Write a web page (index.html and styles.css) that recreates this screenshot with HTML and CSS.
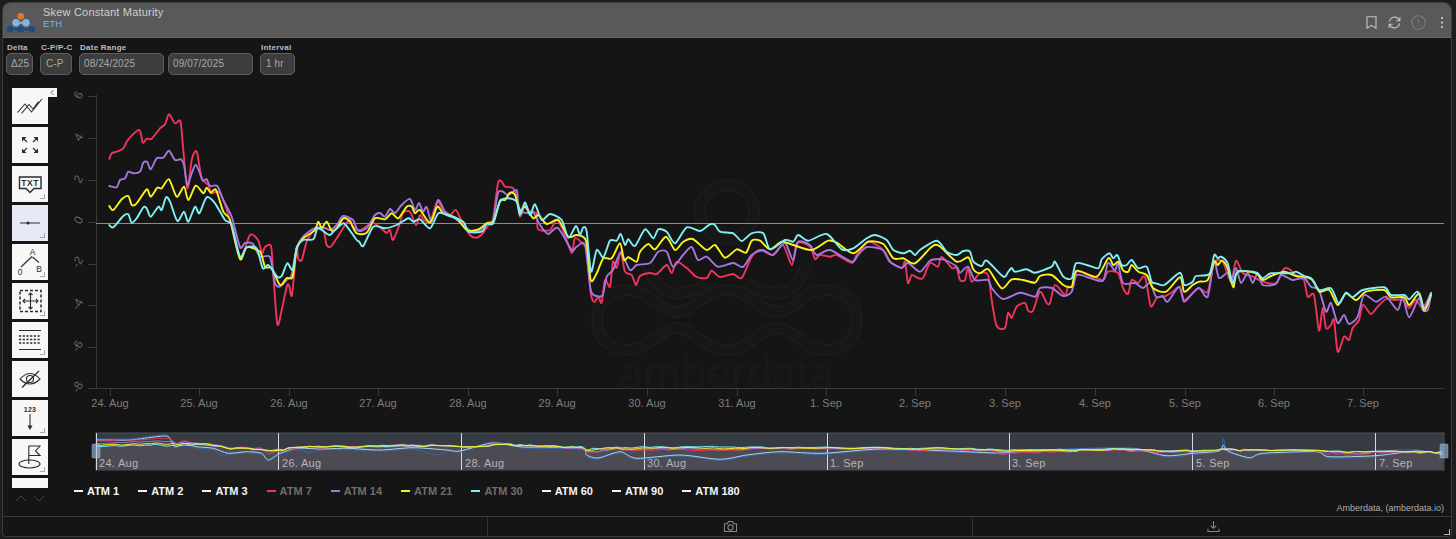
FILE: index.html
```html
<!DOCTYPE html>
<html lang="en">
<head>
<meta charset="utf-8">
<title>Skew Constant Maturity</title>
<link rel="stylesheet" href="styles.css">
</head>
<body>
<div class="app">
  <header class="head">
    <svg class="logo" viewBox="0 0 36 28" width="36" height="28">
      <path class="logo-link-d" d="M5 22.3H27"/>
      <path class="logo-link-l" d="M11 15.7H21"/>
      <circle cx="15.7" cy="9.3" r="3.3" fill="#e8772e"/>
      <circle cx="11" cy="15.7" r="3.7" fill="#7db7e0"/>
      <circle cx="21" cy="15.7" r="3.7" fill="#7db7e0"/>
      <circle cx="5" cy="22.3" r="3.3" fill="#1f4a80"/>
      <circle cx="15.7" cy="22.3" r="3.3" fill="#1f4a80"/>
      <circle cx="26.7" cy="22.3" r="3.3" fill="#1f4a80"/>
    </svg>
    <div class="titles">
      <div class="title">Skew Constant Maturity</div>
      <div class="sub">ETH</div>
    </div>
    <div class="head-icons">
      <svg class="hi i-book" viewBox="0 0 11 13" width="11" height="13"><path d="M1 .7H10V12.2L5.5 9.4 1 12.2Z"/></svg>
      <svg class="hi i-sync" viewBox="0 0 14 14" width="13" height="13"><path d="M1.6 6A5.5 5.5 0 0 1 11.4 3.4L12.8 5M12.8 1.2V5H9M12.4 8A5.5 5.5 0 0 1 2.6 10.6L1.2 9M1.2 12.8V9H5"/></svg>
      <svg class="hi dim i-info" viewBox="0 0 15 15" width="15" height="15"><circle cx="7.5" cy="7.5" r="6.8"/><path d="M7.5 4V8.2M7.5 10.2V11"/></svg>
      <svg class="dots" viewBox="0 0 4 14" width="4" height="14"><circle cx="2" cy="2" r="1.1"/><circle cx="2" cy="6.5" r="1.1"/><circle cx="2" cy="11" r="1.1"/></svg>
    </div>
  </header>

  <section class="controls">
    <div class="field"><label class="lab">Delta</label><div class="inp w-delta">Δ25</div></div>
    <div class="field"><label class="lab">C-P/P-C</label><div class="inp w-cp">C-P</div></div>
    <div class="field"><label class="lab">Date Range</label>
      <div class="pair"><div class="inp w-date">08/24/2025</div><div class="inp w-date">09/07/2025</div></div>
    </div>
    <div class="field"><label class="lab">Interval</label><div class="inp w-int">1 hr</div></div>
  </section>

  <div class="main">
    <aside class="tools">
      <div class="tool">
        <svg viewBox="0 0 36 36"><path d="M5.5 24.5 13 16 19.5 24 30 11M9.5 25.5 17 16.5 21 21 26.5 13.5"/></svg>
        <span class="collapse"><svg viewBox="0 0 9 9"><path d="M5.5 2 3 4.5 5.5 7"/></svg></span>
      </div>
      <div class="tool">
        <svg viewBox="0 0 36 36"><path d="M15 15 11 11M21 15 25 11M15 21 11 25M21 21 25 25"/><path class="fill" d="M10 10H14.5L10 14.5ZM26 10H21.5L26 14.5ZM10 26H14.5L10 21.5ZM26 26H21.5L26 21.5Z"/></svg>
      </div>
      <div class="tool grip">
        <svg viewBox="0 0 36 36"><path class="thick" d="M7.5 11H29V22.5H22L18 26.5 14 22.5H7.5Z"/><text class="ic-t" x="18.2" y="20.2">TXT</text></svg>
      </div>
      <div class="tool grip on">
        <svg viewBox="0 0 36 36"><path d="M8 18H28"/><circle class="fill" cx="16" cy="18" r="1.6"/></svg>
      </div>
      <div class="tool grip">
        <svg viewBox="0 0 36 36"><path d="M9 23 20 12.5M20.5 13 27 18.5"/><text class="ic-s" x="20.5" y="11">A</text><text class="ic-s" x="8" y="30.5">0</text><text class="ic-s" x="27" y="28">B</text></svg>
      </div>
      <div class="tool grip">
        <svg viewBox="0 0 36 36"><path class="dash" d="M8 7.5H29V28.5H8Z"/><path d="M18.5 10V26M11 18H26"/><path d="M16.5 12 18.5 10 20.5 12M16.5 24 18.5 26 20.5 24M13 16 11 18 13 20M24 16 26 18 24 20"/></svg>
      </div>
      <div class="tool grip">
        <svg viewBox="0 0 36 36"><path d="M7 8.5H29M7 27.5H29"/><path class="dots-l" d="M7 14H29M7 17.5H29M7 21H29"/></svg>
      </div>
      <div class="tool">
        <svg viewBox="0 0 36 36"><path d="M8 18Q18 7 28 18 18 28 8 18Z"/><circle cx="18" cy="18" r="3.5"/><path class="ln" d="M10 26.5 27 10"/></svg>
      </div>
      <div class="tool grip">
        <svg viewBox="0 0 36 36"><text class="ic-n" x="18" y="12">123</text><path d="M18 14V28"/><path class="fill" d="M15.5 25.5H20.5L18 30Z"/></svg>
      </div>
      <div class="tool grip">
        <svg viewBox="0 0 36 36"><path d="M16.8 25V7H28L23.5 12 28 16.5H16.8"/><ellipse cx="17.5" cy="25" rx="10.5" ry="4"/></svg>
      </div>
      <div class="tool stub"></div>
      <div class="tool-nav">
        <svg viewBox="0 0 12 7" width="12" height="7"><path d="M1 6 6 1 11 6"/></svg>
        <svg viewBox="0 0 12 7" width="12" height="7"><path d="M1 1 6 6 11 1"/></svg>
      </div>
    </aside>

    <div class="chart-col">
      <svg class="chart" viewBox="60 85 1392 395" width="1392" height="395">
        <g class="wm">
          <circle cx="727" cy="212" r="27"/>
          <path d="M647 263C655 290 670 295 681 293S700 290 707 283M807 263C799 290 784 295 773 293S754 290 747 283"/>
          <path d="M627 290C650 290 660 312 677 312C694 312 704 290 727 290C750 290 760 312 777 312C794 312 804 290 827 290C867 290 867 350 827 350C804 350 794 328 777 328C760 328 750 350 727 350C704 350 694 328 677 328C660 328 650 350 627 350C587 350 587 290 627 290Z"/>
        </g>
        <g class="wm wm-in">
          <circle cx="727" cy="212" r="27"/>
          <path d="M647 263C655 290 670 295 681 293S700 290 707 283M807 263C799 290 784 295 773 293S754 290 747 283"/>
          <path d="M627 290C650 290 660 312 677 312C694 312 704 290 727 290C750 290 760 312 777 312C794 312 804 290 827 290C867 290 867 350 827 350C804 350 794 328 777 328C760 328 750 350 727 350C704 350 694 328 677 328C660 328 650 350 627 350C587 350 587 290 627 290Z"/>
        </g>
        <text class="wm-t" x="727" y="389">amberdata</text>

        <path class="axis" d="M96.5 95V389M88 96.5H96M88 138.5H96M88 180.5H96M88 222.5H96M88 264.5H96M88 305.5H96M88 347.5H96M88 388.5H96"/>
        <path class="axis" d="M96 388.5H1444M110.5 389V396M199.5 389V396M289.5 389V396M378.5 389V396M468.5 389V396M557.5 389V396M647.5 389V396M737.5 389V396M826.5 389V396M915.5 389V396M1005.5 389V396M1095.5 389V396M1185.5 389V396M1274.5 389V396M1363.5 389V396"/>
        <g class="yl">
          <text transform="translate(82 97) rotate(-60)">6</text>
          <text transform="translate(82 139) rotate(-60)">4</text>
          <text transform="translate(82 181) rotate(-60)">2</text>
          <text transform="translate(82 222) rotate(-60)">0</text>
          <text transform="translate(81 264) rotate(-60)">-2</text>
          <text transform="translate(81 306) rotate(-60)">-4</text>
          <text transform="translate(81 348) rotate(-60)">-6</text>
          <text transform="translate(81 389) rotate(-60)">-8</text>
        </g>
        <g class="xl">
          <text x="110" y="407">24. Aug</text><text x="199" y="407">25. Aug</text><text x="289" y="407">26. Aug</text>
          <text x="378" y="407">27. Aug</text><text x="468" y="407">28. Aug</text><text x="557" y="407">29. Aug</text>
          <text x="647" y="407">30. Aug</text><text x="737" y="407">31. Aug</text><text x="826" y="407">1. Sep</text>
          <text x="915" y="407">2. Sep</text><text x="1005" y="407">3. Sep</text><text x="1095" y="407">4. Sep</text>
          <text x="1185" y="407">5. Sep</text><text x="1274" y="407">6. Sep</text><text x="1363" y="407">7. Sep</text>
        </g>

        <path class="zero" d="M96 223.5H1444"/>
        <path class="s red" id="m-red"/>
        <path class="s pur" id="m-pur"/>
        <path class="s yel" id="m-yel"/>
        <path class="s cya" id="m-cya"/>

        <rect class="nav-bg" x="96" y="433" width="1348" height="37"/>
        <path class="nav-area" id="n-area"/>
        <path class="nav-grid" d="M96.5 433V470M278.5 433V470M461.5 433V470M644.5 433V470M827.5 433V470M1009.5 433V470M1192.5 433V470M1375.5 433V470"/>
        <g class="nl">
          <text x="99" y="467">24. Aug</text><text x="282" y="467">26. Aug</text><text x="465" y="467">28. Aug</text>
          <text x="647" y="467">30. Aug</text><text x="830" y="467">1. Sep</text><text x="1012" y="467">3. Sep</text>
          <text x="1196" y="467">5. Sep</text><text x="1379" y="467">7. Sep</text>
        </g>
        <path class="n dkb" id="n-dkb"/>
        <path class="n lib" id="n-lib"/>
        <path class="n red" id="n-red"/>
        <path class="n pur" id="n-pur"/>
        <path class="n cya" id="n-cya"/>
        <path class="n yel" id="n-yel"/>
        <rect class="handle" x="92" y="444" width="8" height="14" rx="1"/>
        <rect class="handle" x="1440" y="444" width="8" height="14" rx="1"/>
      </svg>

      <ul class="legend">
        <li class="li"><i></i>ATM 1</li>
        <li class="li"><i></i>ATM 2</li>
        <li class="li"><i></i>ATM 3</li>
        <li class="li off k-red"><i></i>ATM 7</li>
        <li class="li off k-pur"><i></i>ATM 14</li>
        <li class="li off k-yel"><i></i>ATM 21</li>
        <li class="li off k-cya"><i></i>ATM 30</li>
        <li class="li"><i></i>ATM 60</li>
        <li class="li"><i></i>ATM 90</li>
        <li class="li"><i></i>ATM 180</li>
      </ul>
      <div class="credit">Amberdata, (amberdata.io)</div>
    </div>
  </div>

  <footer class="foot">
    <div class="fb fb-1"></div>
    <div class="fb fb-2"><svg class="fi" viewBox="0 0 16 14" width="15" height="13"><path d="M1.5 4H4.5L5.8 1.5H10.2L11.5 4H14.5V12.5H1.5Z"/><circle cx="8" cy="8" r="2.8"/></svg></div>
    <div class="fb fb-3"><svg class="fi" viewBox="0 0 14 14" width="13" height="13"><path d="M7 1V9M4 6 7 9 10 6M1 9.5V12.5H13V9.5"/></svg></div>
    <svg class="resize" viewBox="0 0 6 6" width="6" height="6"><path d="M5.5 0V5.5H0"/></svg>
  </footer>
</div>
<script src="chart.js"></script>
</body>
</html>
```
FILE: styles.css
```css
* { box-sizing: border-box; }
html, body { margin: 0; height: 100%; overflow: hidden; background: #1e1e1e; }
body { font-family: "Liberation Sans", Arial, sans-serif; padding: 2px 0 0 2px; }

.app {
  width: 1450px; height: 535px; background: #151515;
  border: 1px solid #3c3c3c; border-radius: 8px 8px 4px 4px;
  display: flex; flex-direction: column; overflow: hidden; position: relative;
}

.head {
  height: 35px; flex: none; background: #595959;
  border-bottom: 1px solid #6a6a6a;
  display: flex; align-items: center; padding: 0 7px 0 2px;
}
.logo { flex: none; margin: 1px 2px 0 0; }
.logo-link-d { stroke: #1f4a80; stroke-width: 2; fill: none; }
.logo-link-l { stroke: #7db7e0; stroke-width: 2; fill: none; }
.titles { display: flex; flex-direction: column; margin-top: -5px; }
.title { color: #cfcfcf; font-size: 11px; line-height: 13px; letter-spacing: .2px; }
.sub { color: #74b2ea; font-size: 9.5px; line-height: 10px; letter-spacing: .1px; }
.head-icons { margin-left: auto; display: flex; align-items: center; margin-top: 5px; }
.hi { fill: none; stroke: #c4c4c4; stroke-width: 1.1; flex: none; }
.hi.dim { stroke: #7c7c7c; }
.i-sync { margin-left: 11px; }
.i-info { margin-left: 10px; }
.dots { fill: #d8d8d8; margin-left: 14px; }

.controls { height: 47px; flex: none; display: flex; gap: 7px; padding: 4px 0 0 3px; }
.field { display: flex; flex-direction: column; }
.lab { color: #bdbdbd; font-size: 8px; font-weight: 700; line-height: 11px; height: 11px; width: 0; white-space: nowrap; letter-spacing: .25px; margin-left: 1px; }
.pair { display: flex; gap: 4px; }
.inp {
  height: 22px; background: #3d3d3d; border: 1px solid #5e5e5e; border-radius: 5px;
  color: #a8a8a8; font-size: 10px; line-height: 20px; padding-left: 4px; letter-spacing: .1px;
}
.w-delta { width: 27px; }
.w-cp { width: 32px; padding-left: 5px; }
.w-date { width: 85px; }
.w-int { width: 35px; padding-left: 5px; }

.main { flex: 1; min-height: 0; display: flex; }
.tools { width: 57px; flex: none; padding: 3px 0 0 9px; display: flex; flex-direction: column; gap: 3px; }
.tool {
  width: 36px; height: 36px; flex: none; background: #f7f7f7; position: relative;
}
.tool > svg { width: 36px; height: 36px; display: block; fill: none; stroke: #2c2c2c; stroke-width: 1.1; }
.tool .fill { fill: #2c2c2c; stroke: none; }
.tool .thick { stroke-width: 1.4; }
.tool .dash { stroke-dasharray: 3 2; stroke-width: 1.5; }
.tool .dots-l { stroke-dasharray: 2.2 1.5; stroke-width: 1.4; }
.tool .ln { stroke-width: 1.3; }
.tool.on { background: #e6eaf6; }
.tool.stub { height: 10px; }
.ic-t, .ic-s, .ic-n { fill: #2c2c2c; stroke: none; text-anchor: middle; font-weight: 700; font-family: "Liberation Sans", Arial, sans-serif; }
.ic-t { font-size: 8.5px; letter-spacing: .6px; }
.ic-s { font-size: 8.5px; font-weight: 400; }
.ic-n { font-size: 7px; letter-spacing: .3px; }
.grip::after {
  content: ""; position: absolute; right: 3px; bottom: 3px; width: 4px; height: 4px;
  border-right: 1px solid #a9a9a9; border-bottom: 1px solid #a9a9a9;
}
.collapse { position: absolute; top: 0; left: 36px; width: 9px; height: 9px; background: #f7f7f7; }
.collapse svg { display: block; width: 9px; height: 9px; fill: none; stroke: #666; stroke-width: 1; }
.tool-nav { display: flex; gap: 6px; margin: 4px 0 0 3px; }
.tool-nav svg { fill: none; stroke: #3f3f3f; stroke-width: 1; }

.chart-col { flex: 1; min-width: 0; display: flex; flex-direction: column; }
.chart { display: block; flex: none; }
.chart text { font-family: "Liberation Sans", Arial, sans-serif; }
.wm { fill: none; stroke: #1c1c1c; stroke-width: 12; }
.wm-in { stroke: #171717; stroke-width: 8; }
.chart .wm-t { fill: #191919; stroke: none; font-size: 46px; text-anchor: middle; font-family: Lato, sans-serif; }
.axis { fill: none; stroke: #3a3a3a; stroke-width: 1; }
.yl text { fill: #666; font-size: 12px; text-anchor: middle; }
.xl text { fill: #7d7d7d; font-size: 11px; text-anchor: middle; }
.zero { stroke: #dc7434; stroke-width: 1; }
.s { fill: none; stroke-width: 1.9; stroke-linejoin: round; stroke-linecap: round; }
.n { fill: none; stroke-width: 1; stroke-linejoin: round; }
.red { stroke: #f0345c; }
.pur { stroke: #a476df; }
.yel { stroke: #fbf31c; }
.cya { stroke: #7ff0f6; }
.lib { stroke: #a8d6f6; }
.dkb { stroke: #3468ad; }
.nav-bg { fill: #363b42; stroke: #47535f; stroke-width: 1; }
.nav-area { fill: #4c4b54; stroke: none; }
.nav-grid { stroke: #d9d9d9; stroke-width: 1; fill: none; }
.nl text { fill: #b4b4b8; font-size: 11px; letter-spacing: .3px; }
.handle { fill: #a3c6ea; fill-opacity: .6; stroke: #8db1d6; stroke-width: .5; }

.legend { list-style: none; margin: 0; padding: 0 0 0 14px; height: 22px; flex: none; display: flex; align-items: center; gap: 19px; }
.li { color: #f4f4f4; font-size: 11px; font-weight: 700; display: flex; align-items: center; }
.li i { width: 9px; height: 2px; background: #f4f4f4; margin-right: 4px; }
.li.off { color: #6e6e6e; }
.k-red i { background: #f0345c; }
.k-pur i { background: #a476df; }
.k-yel i { background: #fbf31c; }
.k-cya i { background: #7ff0f6; }
.credit { text-align: right; padding-right: 7px; color: #adadad; font-size: 9px; line-height: 12px; height: 13px; }

.foot { height: 20px; flex: none; display: flex; border-top: 1px solid #3a3a3a; position: relative; }
.fb { display: flex; align-items: center; justify-content: center; border-left: 1px solid #333; }
.fb-1 { width: 484px; border-left: 0; }
.fb-2 { width: 485px; }
.fb-3 { flex: 1; padding-left: 3px; }
.fi { fill: none; stroke: #8a8a8a; stroke-width: 1.1; }
.resize { position: absolute; right: 1px; bottom: 1px; fill: none; stroke: #bdbdbd; stroke-width: 1; }
```
FILE: chart.js
```js
var RED = [109.3,159,111.7,153.3,116.7,151.7,123.3,148.3,128.3,139.3,139.3,130,142.7,142.7,146.7,138.7,151.7,138.7,160,128.3,165,124.3,169,114.3,175,123.3,180.3,121,182.7,143.3,187.3,188.3,191.7,160,195,151.7,197.3,153.3,201.7,178.3,208.3,185,211.7,193.3,220,193,230,220,240,258,250,235,258,240,262,253,265,247,271,246,273,270,277.3,324,281.7,310,286.7,286.7,289,285,292,295,296.7,246.7,298,258,301.7,260,306.7,241.7,313,231.7,320.7,228,324,231.7,326.7,245,330.7,246.7,336.7,238.3,345,225,350,220,353,226.7,360,230,373,223,383,230,386.7,233,390,230,393,240,400,223,403,213,410,211.7,416,225,420,215,424,220,430,221.7,437.3,201.7,443,210,450,215,456,210,461.7,221.7,470,235,476.7,237.7,483,233,490,223,493,220,498,183,501.7,181.7,505,186.7,513,188,516.7,196.7,520,216.7,525,205,530,213,536.7,213,538,229,550,230,556.7,220,563,230,571.7,253,575,238,583,244,586.7,250,590.7,293,594.3,302,598.3,296.7,601.7,302.7,605,280,610,286.7,613,261.7,616.7,268,620.7,251.7,625,271.7,631.7,275,636,285,640,276,650,273,656.7,274,666.7,265,671.7,273,676.7,261.7,686.7,268,696.7,277,706.7,278,711.7,270.7,720,277,733,274,741.7,278,751.7,256.7,760,250,773,255,783,245,792,265,797,243,810,246.7,815,259,820,255,830,256.7,836.7,255,851.7,263,856.7,255,868,241.7,876.7,245,883,250,890,261.7,901.7,268,905,261.7,908,283,911.7,275,918,278,923,278,930,263,938,266.7,941.7,256.7,951.7,268,956.7,268,960,280,965,280,968,268,971.7,281.7,980,273,988,275,991.7,300,996.7,326,1005,328,1008,313,1011.7,317.7,1016.7,306.7,1025,303,1028,310.7,1033,310.7,1040,291.7,1046.7,303,1050,303,1055,285,1065,295,1068,286.7,1073,286.7,1076.7,271.7,1090,275,1103,280,1108,271.7,1118,273,1123,288,1128,294,1131.7,280,1138,283,1145,276.7,1150.7,306,1156.7,298,1164,296.7,1172.7,291.7,1180,286.7,1184,300,1192.7,293,1199,288,1207.7,291.7,1214,263,1222.7,261.7,1231,281.7,1236,260.7,1242.7,273,1252.7,276.7,1262.7,281.7,1276,283,1284,269,1289,269,1299,278,1304,280,1307.7,296.7,1314,295,1319,330.7,1322.7,308,1326,328,1331,325,1334,320,1337.7,351.7,1344,336.7,1349,340,1352.7,328,1359,320,1363,305,1371,314,1377.7,306.7,1386,299,1394,300,1402.7,300,1409,308,1416,300,1422.7,308,1431,292.7];
var PUR = [109.3,186,116.7,187.3,120,180,125,178.3,128.3,171.7,133.3,173.3,140,171.7,143.3,162.7,147.3,162,150.7,169.3,156.7,158.3,163.3,157.7,169,150.7,175,160,181,159.3,184,165,187.3,185,191.7,173.3,195.7,164.7,200,173.3,202.7,180.7,206.7,179.3,210,186,217.3,186,223.3,200,231.7,216.7,240,247,245,243,253,244,260,256.7,270,257,275,283,280,286.7,286.7,280,291.7,275,296.7,248,303,236.7,315,228,325,228,330,230,336.7,225,343,216,353,220,358,230.7,366.7,228,375,215,380,213,385,216.7,390,209,395,213,401.7,205,410,199,415,210,419,203,423,211.7,426.7,207,431.7,221.7,438,200,445,211.7,453,216.7,463,225,471.7,231.7,480,230,486.7,223,493,220,498,193,503,191.7,508,195,516.7,190,518,203,521.7,211.7,528,213,533,211.7,540,225,548,234,558,228,571.7,250,576.7,246.7,585,245,590.7,290,596.7,296,602.7,295,606.7,276.7,613,270,620.7,253,630,270,636.7,265,650,263,658.3,251.7,666.7,251.7,673,266.7,683,255,691.7,247,698,260,706.7,256.7,718,266.7,733,263,743,267,751.7,255,763,250,773,255,785,243,793,260,798,241.7,810,245,816.7,255,830,250,851.7,261.7,858,255,867,247,883,250,890,261.7,901.7,268,908,263,920,271.7,930,260.7,940,259,945,260,956.7,266.7,960,272.7,968,266.7,975,280,988,280,991.7,288,1003,299,1020,292.7,1035,296.7,1040,288,1051.7,288,1063,296,1071.7,291.7,1076.7,275,1090,278,1103,280.7,1108,263,1115,270.7,1118,263,1123,283,1135,283,1143,288,1150,283,1156,296.7,1162.7,296,1167.7,301.7,1179,286.7,1184,301.7,1191,295,1199,288,1207.7,296.7,1214,261.7,1219,278,1227.7,272.7,1231,281.7,1236,268,1241,283,1247.7,273,1252.7,283,1257.7,273,1262.7,285,1276,284,1281,275,1292.7,280,1304,278,1311,286.7,1319,290,1326,311.7,1331,303,1337.7,323,1344,315,1349,324,1357.7,316.7,1364,295,1376,301.7,1386,296.7,1397.7,310,1402.7,296.7,1409,317.3,1419,298,1422.7,310,1427.7,310,1431,295];
var YEL = [109.3,206,113.3,210,121.7,199.3,128.3,196,131.7,205,136.7,203.3,146.7,189.3,150.7,196.7,157.3,187.7,161.7,188.3,169,179.3,176.7,196.7,184,186.7,188.3,200,195.7,185.7,203.3,193.3,206.7,187.7,210.7,192.7,216,190,223.3,211.7,230,220,240,259,246.7,247.3,260,251.7,265,266.7,271.7,268.3,280,285,286.7,278,292.7,276.7,296.7,248.3,303.3,238.3,315,230,318.3,221.7,321.7,228,326.7,221.7,331.7,230.7,336.7,228.3,343.3,218.3,350,221.7,356.7,233.3,366.7,232.7,375,218.3,385,219.3,391.7,213.3,398.3,218.3,406.7,206.7,411.7,206.7,415,213.3,420,210,430,222.7,437.3,206.7,443.3,213.3,456.7,218.3,466.7,230,478.3,229.3,486.7,223.3,493.3,221.7,500,200.7,505,200,510,192.7,515,195,520,211.7,525,206.7,533.3,218.3,538.3,215,546.7,224,558.3,220,568.3,236.7,576.7,235,586,240.7,590.7,280,596.7,273.3,603.3,258.3,611.7,258.3,620,243.3,624,260,628.3,257.3,636.7,261.7,640,251.7,648.3,244,655,249.3,666,236.7,675,250,683.3,241.7,692.7,239,706.7,250,715,245,725,257.7,736.7,249.3,746,252.7,751.7,240.7,760,240.7,770,249.3,781.7,241.7,793.3,245,811.7,250,828.3,240.7,836.7,242.7,853.3,253.3,868.3,241.7,883.3,244,893.3,258.3,903.3,258.3,915,263.3,931.7,246.7,939.3,246,956.7,261.7,968.3,257.3,973.3,269.3,980,273.3,988.3,269.3,1001.7,288.3,1011.7,279.3,1023.3,280,1035,282.7,1040,276,1051.7,275,1063.3,285,1071.7,286.7,1076.7,270.7,1096.7,276.7,1108.3,258.3,1113.3,265,1118.3,261.7,1123.3,270.7,1128.3,271.7,1131.7,265,1138.3,271.7,1146.7,275,1153.3,288.3,1166,291.7,1180,277.3,1184.3,291.7,1192.7,285,1199.3,281.7,1207.7,280,1214.3,261.7,1217.7,265,1222,260.7,1227.7,268.3,1233.3,287.3,1237.7,271.7,1256,273.3,1262.7,280,1271,276,1284.3,271.7,1296,276,1304.3,276.7,1312.7,280,1319.3,291.7,1329.3,290,1337.7,305,1346,293.3,1356,300,1366,291.7,1384.3,290,1391,297.3,1404.3,297.3,1409.3,305,1419.3,293.3,1424.3,310.7,1431,295];
var CYA = [109.3,225,113.3,227.3,123.3,216,128.3,214.3,131.7,222.7,136.7,218.3,143.3,207.3,146.7,208.3,150.7,216.7,158.3,206.7,161.7,210,166,197.3,170,201.7,177.3,221,184,211.7,188.3,221.7,195,206.7,199.3,213.3,206.7,197.3,215,203.3,225,220,231.7,225,240,256.7,246.7,247.3,256.7,248.3,262.7,268.3,268.3,265,277.3,276.7,281.7,276,287.3,263.3,292.7,270,296.7,248.3,303.3,240,313.3,239.3,317.3,228.3,321.7,230,329.3,235,335,230,343.3,223.3,348.3,228.3,356.7,240,359.3,241.7,363.3,246,373.3,226.7,385,228.3,396.7,225,408.3,218.3,413.3,221.7,420,219.3,430,228.3,438.3,213.3,446.7,215,463.3,221.7,468.3,231.7,481.7,231.7,486.7,224,493.3,223.3,500,201.7,508.3,198.3,516.7,201.7,520,215,525,202.3,530,215,535,204.3,541.7,220,550,214,561.7,220,568.3,237.7,576,226,580,235,583.3,227.3,586.7,231.7,591,271.7,596.7,250,603.3,257.3,610,240.7,616.7,240.7,620.7,234,625,245,628.3,239.3,635,246,645,229.3,653.3,238.3,658.3,229.3,666.7,231.7,675,243.3,686.7,227.3,700,231,710,224.3,715,225,720,231.7,733.3,233.3,741.7,241,751.7,233.3,763.3,233.3,770,249.3,785,240,793.3,241.7,798.3,235,808.3,240.7,826.7,234,841.7,249.3,853.3,248.3,866.7,238.3,875,235,886.7,240,893.3,250,903.3,253.3,910,250.7,915,255,920,250,936.7,240.7,946.7,251.7,956.7,255,963.3,251,970,251.7,973.3,261.7,981.7,266,986.7,260.7,1003.3,276.7,1008.3,271.7,1011.7,268,1015,271.7,1026.7,269.3,1035,272.7,1051.7,266.7,1055,261.7,1063.3,276.7,1071.7,278.3,1076,263.3,1086.7,265,1098.3,268.3,1101.7,259.3,1109.3,253.3,1113.3,258.3,1117.3,255,1121.7,265,1126.7,265,1131.7,260,1138.3,268.3,1146.7,266.7,1151.7,281.7,1156,283.3,1164.3,285,1180,272.7,1184.3,285,1192.7,281.7,1196,276,1209.3,274,1214.3,255,1217.7,258.3,1221,256.7,1227.7,263.3,1232.7,283.3,1237.7,271.7,1256,272.3,1262.7,278.3,1271,273.3,1291,273.3,1296,271.7,1304.3,276,1311,278.3,1319.3,290,1331,288.3,1338.7,303.3,1346,292.7,1352.7,297.3,1362.7,290,1384.3,287.3,1391,295,1404.3,295,1409.3,299.3,1417.7,291.7,1424.3,308.3,1431,293.3];
var LIB = [97,440,130,440,156.7,436.7,168.3,436.7,175,446.7,183.3,443.3,196.7,446.7,213.3,448.3,228.3,453.3,246.7,451.7,261.7,453.3,268.3,460,280,453.3,296.7,448.3,320,449,346.7,448.3,380,450,413.3,447.7,446.7,450,460,451,493,443,523,447,580,448,586.7,455,598,458,620,451.7,636.7,458.3,680,455,720,459.3,746.7,455,780,451.7,823,453.3,880,449,950,451,1000,453,1030,450,1066,450,1132.7,449,1166,455.7,1192.7,453.3,1219.3,451,1223.3,445,1227.7,451,1249.3,457.7,1262.7,453.3,1316,451.7,1329.3,456.7,1376,455.7,1416,451,1442.7,454.3];
var DKB = [97,439,130,439,156.7,435.7,168.3,435.7,175,448,183.3,444.5,196.7,448,213.3,449.5,222,456,228.3,454.5,246.7,453,261.7,454.5,268.3,461,280,454.5,296.7,449.5,310,453,320,450,346.7,449.5,380,451,413.3,449,435,455,446.7,451,460,452,493,442,523,448,580,449,586.7,456.5,598,459,620,453,636.7,459.5,680,456,720,460.5,746.7,456,780,453,823,454.5,880,450,950,452,1000,454,1030,451,1066,449,1132.7,448,1166,457,1192.7,454.5,1219.3,451,1223.3,438,1227.7,451,1249.3,459,1262.7,454.5,1316,452,1329.3,458,1376,457,1385,451,1416,450,1442.7,455];

var X0 = 97, XK = (1442 - 97) / (1431 - 109.3);

function pairs(a) {
  var out = [];
  for (var i = 0; i < a.length; i += 2) out.push([a[i], a[i + 1]]);
  return out;
}
function toNav(a) {
  return a.map(function (p) { return [X0 + (p[0] - 109.3) * XK, 445 + (p[1] - 206) * 0.075]; });
}
function smooth(pts) {
  var t = 0.13, d = "M" + pts[0][0].toFixed(1) + " " + pts[0][1].toFixed(1);
  for (var i = 0; i < pts.length - 1; i++) {
    var p0 = pts[i ? i - 1 : 0], p1 = pts[i], p2 = pts[i + 1], p3 = pts[i + 2] || p2;
    d += "C" + (p1[0] + (p2[0] - p0[0]) * t).toFixed(1) + " " + (p1[1] + (p2[1] - p0[1]) * t).toFixed(1) +
         " " + (p2[0] - (p3[0] - p1[0]) * t).toFixed(1) + " " + (p2[1] - (p3[1] - p1[1]) * t).toFixed(1) +
         " " + p2[0].toFixed(1) + " " + p2[1].toFixed(1);
  }
  return d;
}
function set(id, d) { document.getElementById(id).setAttribute("d", d); }

var sets = { red: pairs(RED), pur: pairs(PUR), yel: pairs(YEL), cya: pairs(CYA) };
Object.keys(sets).forEach(function (k) {
  set("m-" + k, smooth(sets[k]));
  set("n-" + k, smooth(toNav(sets[k])));
});
set("n-lib", smooth(pairs(LIB)));
set("n-dkb", smooth(pairs(DKB)));
var yn = toNav(sets.yel);
set("n-area", smooth(yn) + "L1443.5 " + yn[yn.length - 1][1] + "V469.5H96.5V" + yn[0][1] + "Z");
```
